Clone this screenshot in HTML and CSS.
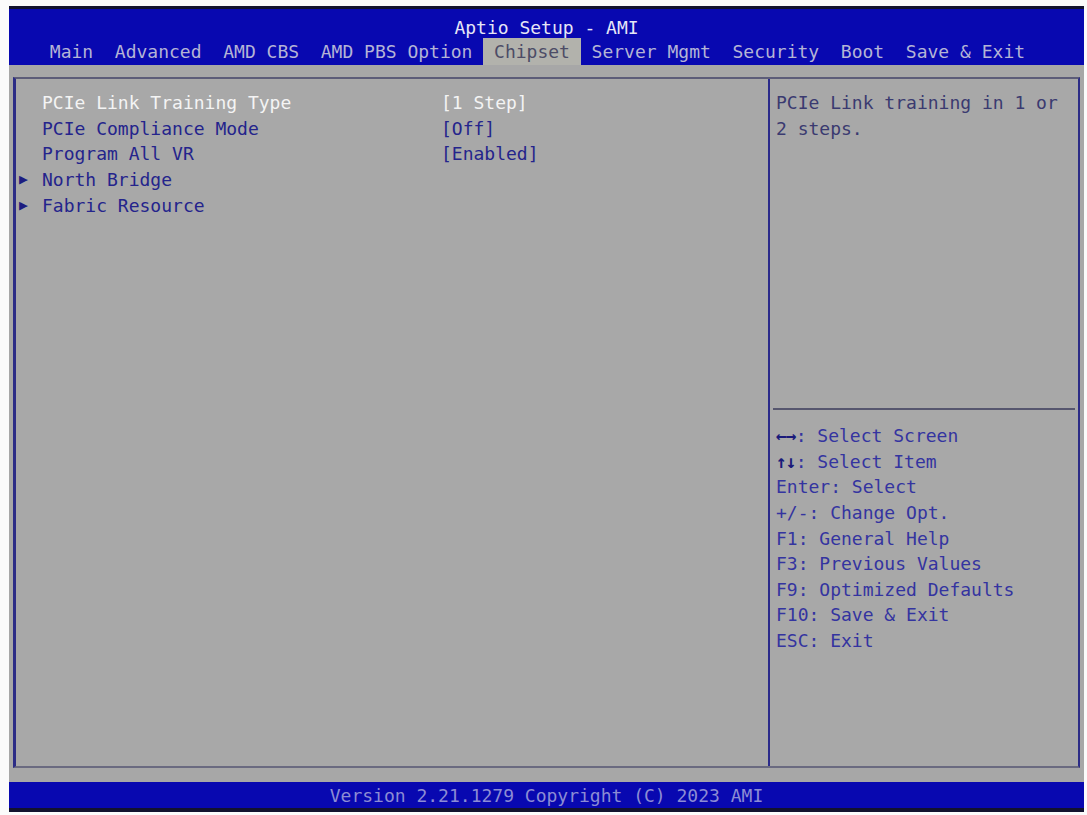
FILE: index.html
```html
<!DOCTYPE html>
<html lang="en">
<head>
<meta charset="utf-8">
<title>Aptio Setup - AMI</title>
<link rel="stylesheet" href="styles.css">
</head>
<body>
<div class="screen">
  <header class="top">
    <div class="title">Aptio Setup - AMI</div>
    <nav class="tabs">
      <span class="tab">Main</span>
      <span class="tab">Advanced</span>
      <span class="tab">AMD CBS</span>
      <span class="tab">AMD PBS Option</span>
      <span class="tab active">Chipset</span>
      <span class="tab">Server Mgmt</span>
      <span class="tab">Security</span>
      <span class="tab">Boot</span>
      <span class="tab">Save &amp; Exit</span>
    </nav>
  </header>

  <main class="body">
    <div class="frame">
      <section class="items">
        <div class="row selected"><span class="mark"></span><span class="label">PCIe Link Training Type</span><span class="value">[1 Step]</span></div>
        <div class="row"><span class="mark"></span><span class="label">PCIe Compliance Mode</span><span class="value">[Off]</span></div>
        <div class="row"><span class="mark"></span><span class="label">Program All VR</span><span class="value">[Enabled]</span></div>
        <div class="row"><span class="mark">&#9654;</span><span class="label">North Bridge</span><span class="value"></span></div>
        <div class="row"><span class="mark">&#9654;</span><span class="label">Fabric Resource</span><span class="value"></span></div>
      </section>
      <aside class="side">
        <div class="help">PCIe Link training in 1 or<br>2 steps.</div>
        <div class="keys">
          <div class="key"><span class="arw">&larr;&rarr;</span>: Select Screen</div>
          <div class="key"><span class="arw">&uarr;&darr;</span>: Select Item</div>
          <div class="key">Enter: Select</div>
          <div class="key">+/-: Change Opt.</div>
          <div class="key">F1: General Help</div>
          <div class="key">F3: Previous Values</div>
          <div class="key">F9: Optimized Defaults</div>
          <div class="key">F10: Save &amp; Exit</div>
          <div class="key">ESC: Exit</div>
        </div>
      </aside>
    </div>
  </main>

  <footer class="bottom">Version 2.21.1279 Copyright (C) 2023 AMI</footer>
</div>
</body>
</html>
```

FILE: styles.css
```css
html, body {
  margin: 0;
  padding: 0;
  background: #fbfbfb;
}

body {
  font-family: "DejaVu Sans Mono", "Liberation Mono", monospace;
  font-size: 18px;
}

.screen {
  margin: 6px 0 0 9px;
  width: 1075px;
  height: 806px;
  display: flex;
  flex-direction: column;
  background: #a7a7a7;
}

/* header: title line and menu tabs */
.top {
  background: #0808b0;
  border-top: 3px solid #12122e;
  padding-top: 8px;
  height: 48px;
  box-sizing: content-box;
  display: flex;
  flex-direction: column;
}

.title {
  text-align: center;
  line-height: 21px;
  height: 21px;
  color: #e6e6f6;
}

.tabs {
  display: flex;
  padding-left: 30px;
  height: 27px;
  line-height: 28px;
}

.tab {
  padding: 0 1ch;
  color: #b4b4d6;
  white-space: pre;
}

.active {
  background: #b2b2ac;
  color: #4c4c66;
}

/* gray work area */
.body {
  flex: 1;
  min-height: 0;
  padding: 12px 4px 14px 4px;
  display: flex;
}

.frame {
  flex: 1;
  display: flex;
  border-left: 3px solid #2c2c86;
  border-right: 2px solid #2c2c86;
  border-top: 2px solid #5c5c78;
  border-bottom: 2px solid #6a6a80;
  background: #a8a8a8;
}

.items {
  width: 752px;
  padding-top: 11px;
  border-right: 2px solid #2a2a8a;
}

.row {
  display: grid;
  grid-template-columns: 26px 399px 1fr;
  height: 25.7px;
  line-height: 25.7px;
  color: #24248c;
  white-space: pre;
}

.mark {
  font-size: 15px;
  padding-left: 3px;
  color: #1c1c80;
}

.selected .label,
.selected .value {
  color: #f4f4f4;
}

.side {
  flex: 1;
  display: flex;
  flex-direction: column;
  padding: 0 3px 0 0;
}

.help {
  height: 318px;
  padding: 11px 0 0 3px;
  margin-left: 3px;
  color: #3a3a70;
  line-height: 25.7px;
  border-bottom: 2px solid #56566e;
}

.keys {
  padding: 13px 0 0 6px;
  color: #3434a0;
}

.key {
  height: 25.65px;
  line-height: 25.65px;
  white-space: pre;
}

.arw {
  color: #1a1a7a;
  letter-spacing: -1px;
  font-weight: bold;
}

/* footer bar */
.bottom {
  background: #0808b0;
  border-bottom: 4px solid #12122e;
  height: 26px;
  line-height: 28px;
  text-align: center;
  color: #8c8cd4;
}
```
